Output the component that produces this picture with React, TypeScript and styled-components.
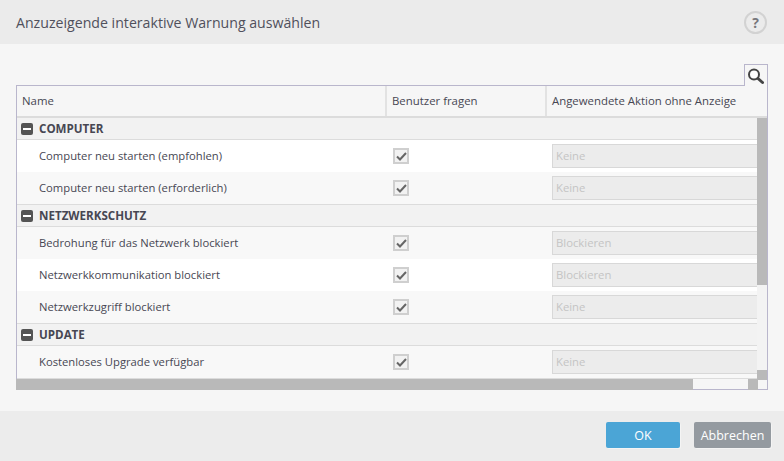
import styled, { createGlobalStyle } from 'styled-components';

type RowType = { name: string, ask: boolean, action: string }
type GroupType = { title: string, rows: RowType[] }

const groups: GroupType[] = [
  {
    title: "COMPUTER",
    rows: [
      { name: "Computer neu starten (empfohlen)", ask: true, action: "Keine" },
      { name: "Computer neu starten (erforderlich)", ask: true, action: "Keine" },
    ],
  },
  {
    title: "NETZWERKSCHUTZ",
    rows: [
      { name: "Bedrohung für das Netzwerk blockiert", ask: true, action: "Blockieren" },
      { name: "Netzwerkkommunikation blockiert", ask: true, action: "Blockieren" },
      { name: "Netzwerkzugriff blockiert", ask: true, action: "Keine" },
    ],
  },
  {
    title: "UPDATE",
    rows: [
      { name: "Kostenloses Upgrade verfügbar", ask: true, action: "Keine" },
    ],
  },
]

const App = () => {
  // the stripes count the group rows too
  let rowIndex = -1

  return (
    <Page>
      <GlobalStyle />
      <Header>
        <Title>Anzuzeigende interaktive Warnung auswählen</Title>
        <Help>?</Help>
      </Header>

      <Content>
        <SearchBar>
          <SearchTab>
            <svg width="18" height="17" viewBox="0 0 18 17">
              <circle cx="7" cy="6.5" r="5" fill="#fff" stroke="#444" strokeWidth="2" />
              <path d="M11 10.5 L15.5 14.5" stroke="#444" strokeWidth="3" strokeLinecap="round" />
            </svg>
          </SearchTab>
        </SearchBar>

        <Table>
          <HeadRow>
            <HeadCell>Name</HeadCell>
            <HeadCell>Benutzer fragen</HeadCell>
            <HeadCell>Angewendete Aktion ohne Anzeige</HeadCell>
          </HeadRow>

          <BodyWrap>
            <Rows>
              {groups.map(group => {
                rowIndex++
                return (
                  <div key={group.title}>
                    <GroupRow>
                      <Collapse />
                      <GroupTitle>{group.title}</GroupTitle>
                    </GroupRow>
                    {group.rows.map(row => {
                      rowIndex++
                      return (
                        <Row key={row.name} $light={rowIndex % 2 === 1}>
                          <RowName>{row.name}</RowName>
                          <AskCell>
                            <CheckBox>
                              <svg width="11" height="9" viewBox="0 0 11 9">
                                <path d="M1 4.5 L4 7.5 L10 1" fill="none" stroke="#666" strokeWidth="2" />
                              </svg>
                            </CheckBox>
                          </AskCell>
                          <ActionCell>
                            <ActionSelect>{row.action}</ActionSelect>
                          </ActionCell>
                        </Row>
                      )
                    })}
                  </div>
                )
              })}
            </Rows>
            <VScroll>
              <VThumb />
              <VKnob />
            </VScroll>
          </BodyWrap>

          <HScroll>
            <HThumb />
            <HKnob />
          </HScroll>
        </Table>
      </Content>

      <Footer>
        <OkButton>OK</OkButton>
        <CancelButton>Abbrechen</CancelButton>
      </Footer>
    </Page>
  )
}

export default App

const GlobalStyle = createGlobalStyle`
  html, body {
    margin:0;
    padding:0;
    background:#f6f6f6;
  }
`

const Page = styled.div`
  display:flex;
  flex-direction:column;
  width:784px;
  height:461px;
  overflow:hidden;
  font-family:"Open Sans", "Noto Sans", sans-serif;
  color:#474753;
`

const Header = styled.header`
  display:flex;
  align-items:center;
  justify-content:space-between;
  height:44px;
  padding:0 17px 0 16px;
  background-color:#ebebeb;
`

const Title = styled.h1`
  margin:0;
  font-size:14.15px;
  font-weight:400;
  color:#50505c;
`

const Help = styled.div`
  display:flex;
  align-items:center;
  justify-content:center;
  box-sizing:border-box;
  width:23px;
  height:23px;
  margin-top:1px;
  border:2px solid #d2d2d2;
  border-radius:50%;
  font-size:14px;
  font-weight:700;
  color:#77777c;
`

const Content = styled.main`
  display:flex;
  flex-direction:column;
  height:367px;
  padding:20px 16px 0;
  box-sizing:border-box;
  background-color:#f6f6f6;
`

const SearchBar = styled.div`
  display:flex;
  justify-content:flex-end;
  height:21px;
  position:relative;
  z-index:1;
`

const SearchTab = styled.div`
  display:flex;
  align-items:flex-start;
  justify-content:center;
  box-sizing:border-box;
  width:24px;
  height:22px;
  padding-top:3px;
  border:1px solid #b9b6cc;
  border-bottom:none;
  background-color:#f6f6f6;
`

const Table = styled.div`
  display:flex;
  flex-direction:column;
  box-sizing:border-box;
  width:752px;
  height:305px;
  border:1px solid #b9b6cc;
`

const HeadRow = styled.div`
  display:grid;
  grid-template-columns:370px 160px 1fr;
  flex:none;
  height:32px;
  box-sizing:border-box;
  border-bottom:2px solid #dcdcdc;
`

const HeadCell = styled.div`
  display:flex;
  align-items:center;
  padding:0 0 1px 5px;
  box-sizing:border-box;
  border-right:2px solid #e2e2e2;
  font-size:11.4px;
  color:#474753;
  &:last-child {
    border-right:none;
  }
`

const BodyWrap = styled.div`
  display:flex;
  flex:1;
  min-height:0;
`

const Rows = styled.div`
  flex:1;
  min-width:0;
  overflow:hidden;
`

const GroupRow = styled.div`
  display:flex;
  align-items:center;
  height:22px;
  box-sizing:border-box;
  padding-left:4px;
  background-color:#f2f2f2;
  border-bottom:1px solid #dcdcdc;
`

const Collapse = styled.span`
  display:flex;
  align-items:center;
  justify-content:center;
  width:12px;
  height:12px;
  border-radius:2px;
  background-color:#545454;
  &::after {
    content:"";
    width:8px;
    height:2px;
    background-color:#fff;
  }
`

const GroupTitle = styled.span`
  margin-left:6px;
  font-size:11.6px;
  font-weight:700;
  color:#474753;
`

type RowProps = {
  $light:boolean
}

const Row = styled.div<RowProps>`
  display:grid;
  grid-template-columns:370px 160px 1fr;
  align-items:center;
  height:32px;
  background-color:${props => props.$light ? "#ffffff" : "#f8f8f8"};
  &:last-child {
    height:33px;
    border-bottom:1px solid #dcdcdc;
    box-sizing:border-box;
  }
`

const RowName = styled.div`
  padding:0 0 2px 22px;
  font-size:11.25px;
  color:#474753;
`

const AskCell = styled.div`
  padding-left:6px;
`

const CheckBox = styled.div`
  display:flex;
  align-items:center;
  justify-content:center;
  box-sizing:border-box;
  width:16px;
  height:16px;
  border:2px solid #cfcfcf;
  background-color:#f2f2f2;
`

const ActionCell = styled.div`
  padding-left:5px;
  overflow:hidden;
`

const ActionSelect = styled.div`
  display:flex;
  align-items:center;
  box-sizing:border-box;
  width:240px;
  height:24px;
  padding:0 0 2px 3px;
  border:1px solid #d8d8d8;
  background-color:#ececec;
  font-size:11.3px;
  color:#c4c4c4;
`

const VScroll = styled.div`
  display:flex;
  flex-direction:column;
  justify-content:space-between;
  flex:none;
  width:10px;
  background-color:#f3f3f3;
`

const VThumb = styled.div`
  height:167px;
  background-color:#b9b9b9;
`

const VKnob = styled.div`
  position:relative;
  height:10px;
  margin-bottom:-1px;
  background-color:#b9b9b9;
`

const HScroll = styled.div`
  display:flex;
  flex:none;
  height:10px;
  background-color:#f6f6f6;
`

const HThumb = styled.div`
  width:677px;
  margin:0 0 -1px -1px;
  background-color:#b9b9b9;
`

const HKnob = styled.div`
  width:10px;
  margin:0 0 -1px 55px;
  background-color:#b9b9b9;
`

const Footer = styled.footer`
  display:flex;
  align-items:flex-start;
  justify-content:flex-end;
  gap:14px;
  flex:1;
  padding:11px 13px 0 0;
  background-color:#ececec;
`

const OkButton = styled.button`
  width:74px;
  height:26px;
  padding:0;
  border:none;
  border-radius:2px;
  box-shadow:1px 1px 0 #f4f4f4;
  background-color:#4ba5d6;
  font-family:inherit;
  font-size:12.5px;
  color:#fff;
`

const CancelButton = styled(OkButton)`
  width:77px;
  background-color:#949aa0;
`
